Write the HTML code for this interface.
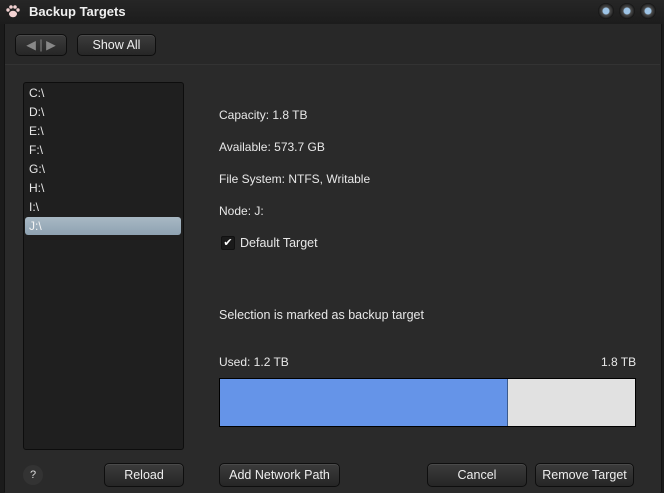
<!DOCTYPE html>
<html><head><style>
body{margin:0;width:664px;height:492px;overflow:hidden;background:#1b1b1b;font-family:"Liberation Sans",sans-serif;font-size:12px;color:#e8e8e8;position:relative}
.a{position:absolute}
.btn{position:absolute;height:22px;border:1px solid #0e0e0e;border-radius:5px;background:linear-gradient(#3c3c3c,#262626);box-shadow:inset 0 1px 0 #4a4a4a;color:#eee;text-align:center;line-height:22px;font-size:12.5px;box-sizing:content-box}
.t{position:absolute;left:219px;font-size:12px}
.li{position:absolute;left:29px;font-size:12px}
.dot{position:absolute;top:3px;width:16px;height:16px;border-radius:50%;background:radial-gradient(circle,#9ec4e6 0 3px,#4a4a4a 4px,#333 6px,#111 8px)}
</style></head><body>
<div class="a" style="left:0;top:0;width:664px;height:24px;background:linear-gradient(#262626,#1c1c1c)"></div>
<svg class="a" style="left:5px;top:3px" width="16" height="16" viewBox="0 0 16 16"><g fill="#f3d2d2"><ellipse cx="8" cy="11" rx="4" ry="3.2"/><circle cx="3" cy="7" r="1.7"/><circle cx="6" cy="4" r="1.8"/><circle cx="10" cy="4" r="1.8"/><circle cx="13" cy="7" r="1.7"/></g></svg>
<div class="a" style="left:29px;top:4px;font-weight:bold;font-size:13px;color:#f0f0f0">Backup Targets</div>
<div class="dot" style="left:598px"></div><div class="dot" style="left:619px"></div><div class="dot" style="left:640px"></div>
<div class="a" style="left:4px;top:24px;width:656px;height:468px;background:#282828;border-left:1px solid #121212;border-right:1px solid #121212"></div>
<div class="a" style="left:5px;top:64px;width:655px;height:428px;background:#2a2a2a;border-top:1px solid #333"></div>
<div class="btn" style="left:15px;top:34px;width:50px;height:20px;line-height:20px;color:#888">◀&nbsp;|&nbsp;▶</div>
<div class="btn" style="left:77px;top:34px;width:77px;height:20px;line-height:20px">Show All</div>
<div class="a" style="left:23px;top:82px;width:159px;height:366px;background:#1f1f1f;border:1px solid #0d0d0d;border-radius:3px"></div>
<div class="a" style="left:25px;top:217px;width:156px;height:18px;background:linear-gradient(#a8b8c4,#8ea2b2);border-radius:3px"></div>
<div class="li" style="top:86px">C:\</div><div class="li" style="top:105px">D:\</div><div class="li" style="top:124px">E:\</div><div class="li" style="top:143px">F:\</div><div class="li" style="top:162px">G:\</div><div class="li" style="top:181px">H:\</div><div class="li" style="top:200px">I:\</div><div class="li" style="top:219px;color:#f4f4f4">J:\</div>
<div class="t" style="top:108px">Capacity: 1.8 TB</div>
<div class="t" style="top:140px">Available: 573.7 GB</div>
<div class="t" style="top:172px">File System: NTFS, Writable</div>
<div class="t" style="top:204px">Node: J:</div>
<div class="a" style="left:221px;top:236px;width:12px;height:12px;background:#1a1a1a;border-radius:2px;border:1px solid #111;color:#fff;font-size:11px;line-height:12px;text-align:center">✔</div>
<div class="a" style="left:240px;top:236px;font-size:12.5px">Default Target</div>
<div class="t" style="top:308px;font-size:12.5px">Selection is marked as backup target</div>
<div class="t" style="top:355px">Used: 1.2 TB</div>
<div class="a" style="left:601px;top:355px">1.8 TB</div>
<div class="a" style="left:219px;top:378px;width:415px;height:47px;border:1px solid #000;background:#e1e1e1"></div>
<div class="a" style="left:220px;top:379px;width:287px;height:47px;background:#6594e8;border-right:1px solid #3b5a8c"></div>
<div class="a" style="left:23px;top:465px;width:20px;height:20px;border-radius:50%;background:#333;color:#ddd;text-align:center;line-height:20px;font-size:11px">?</div>
<div class="btn" style="left:104px;top:463px;width:78px">Reload</div>
<div class="btn" style="left:219px;top:463px;width:119px">Add Network Path</div>
<div class="btn" style="left:427px;top:463px;width:98px">Cancel</div>
<div class="btn" style="left:535px;top:463px;width:97px">Remove Target</div>
</body></html>
